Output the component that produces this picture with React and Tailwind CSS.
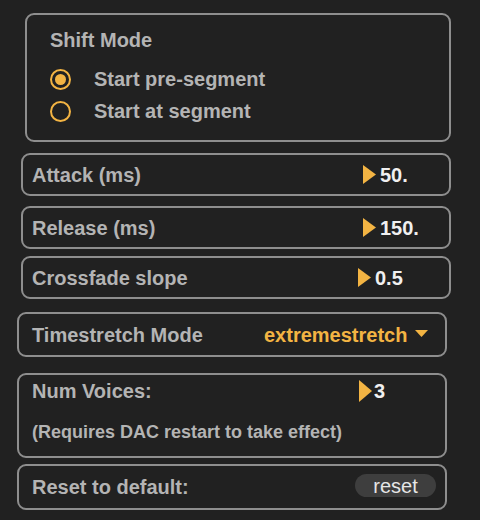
const font = { fontFamily: '"Liberation Sans", Arial, sans-serif' };

function Arrow({ h = 19 }) {
  return (
    <svg width="13" height={h} viewBox={`0 0 13 ${h}`} className="shrink-0">
      <polygon points={`0,0 13,${h / 2} 0,${h}`} fill="#f3b443" />
    </svg>
  );
}

function NumberRow({ label, value, labelWidth, mt }) {
  return (
    <div className={`${mt} ml-[21px] w-[430px] h-[43px] border-2 border-[#8e8e8e] rounded-[9px] flex items-center pl-[9px]`}>
      <span className={`${labelWidth} text-[#b4b4b4]`}>{label}</span>
      <Arrow />
      <span className="ml-[4px] text-[#f0f0f0]">{value}</span>
    </div>
  );
}

function Radio({ checked, label }) {
  return (
    <div className="flex items-center h-[24px]">
      <span className="w-[21px] h-[21px] rounded-full border-2 border-[#f3b443] flex items-center justify-center">
        {checked && <span className="w-[11px] h-[11px] rounded-full bg-[#f3b443]" />}
      </span>
      <span className="ml-[23px] text-[#b4b4b4]">{label}</span>
    </div>
  );
}

export default function App() {
  return (
    <div className="w-[480px] h-[520px] bg-[#212121] overflow-hidden pt-[13px] font-bold text-[20px] leading-[24px]" style={font}>
      <div className="ml-[25px] w-[426px] h-[129px] border-2 border-[#8e8e8e] rounded-[9px] pl-[23px] pt-[13px]">
        <div className="text-[#b4b4b4]">Shift Mode</div>
        <div className="mt-[15px] flex flex-col gap-[8px]">
          <Radio checked label="Start pre-segment" />
          <Radio label="Start at segment" />
        </div>
      </div>

      <NumberRow mt="mt-[11px]" label="Attack (ms)" value="50." labelWidth="w-[331px]" />
      <NumberRow mt="mt-[10px]" label="Release (ms)" value="150." labelWidth="w-[331px]" />
      <NumberRow mt="mt-[7px]" label="Crossfade slope" value="0.5" labelWidth="w-[326px]" />

      <div className="mt-[13px] ml-[17px] w-[430px] h-[45px] border-2 border-[#8e8e8e] rounded-[9px] flex items-center pl-[13px]">
        <span className="w-[232px] text-[#b4b4b4]">Timestretch Mode</span>
        <span className="text-[#f3b443]">extremestretch</span>
        <svg width="13" height="7" viewBox="0 0 13 7" className="ml-[8px] mb-[2px]">
          <polygon points="0,0 13,0 6.5,7" fill="#f3b443" />
        </svg>
      </div>

      <div className="mt-[16px] ml-[17px] w-[430px] h-[85px] border-2 border-[#8e8e8e] rounded-[9px] pl-[13px] pt-[4px]">
        <div className="flex items-center h-[24px]">
          <span className="w-[327px] text-[#b4b4b4]">Num Voices:</span>
          <Arrow h={22} />
          <span className="ml-[2px] text-[#f0f0f0]">3</span>
        </div>
        <div className="mt-[17px] text-[18px] text-[#b4b4b4]">(Requires DAC restart to take effect)</div>
      </div>

      <div className="mt-[6px] ml-[17px] w-[430px] h-[46px] border-2 border-[#8e8e8e] rounded-[9px] flex items-center pl-[13px]">
        <span className="w-[323px] text-[#b4b4b4]">Reset to default:</span>
        <button className="w-[81px] h-[23px] mb-[3px] rounded-full bg-[#3e3e3e] text-[#e6e6e6] text-[20px] leading-[22px] font-normal" style={font}>
          reset
        </button>
      </div>
    </div>
  );
}
